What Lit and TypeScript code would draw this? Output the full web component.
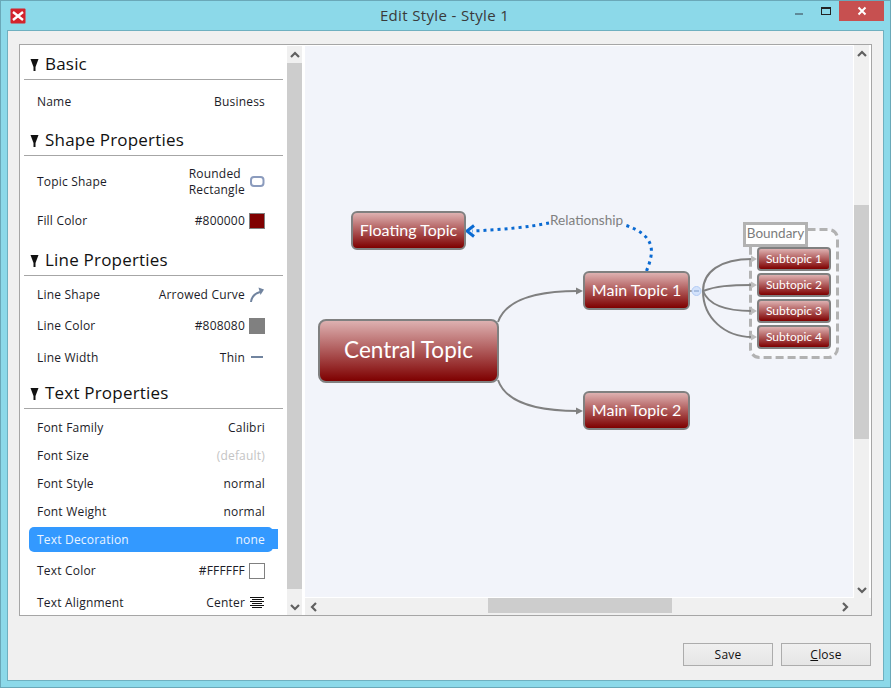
import { LitElement, html, css, svg, nothing } from 'lit';
import { customElement } from 'lit/decorators.js';

type Icon = 'shape' | 'curve' | 'thin' | 'align';

interface Row {
  label: string;
  value: string | string[];
  h: number;
  swatch?: string;
  icon?: Icon;
  muted?: boolean;
  selected?: boolean;
}

interface Section {
  title: string;
  pad: string;
  rows: Row[];
}

interface TopicNode {
  label: string;
  x: number;
  y: number;
  w: number;
  h: number;
  size: string;
}

const SECTIONS: Section[] = [
  {
    title: 'Basic',
    pad: '6px 0 10px',
    rows: [{ label: 'Name', value: 'Business', h: 30 }],
  },
  {
    title: 'Shape Properties',
    pad: '6px 0 6px',
    rows: [
      { label: 'Topic Shape', value: ['Rounded', 'Rectangle'], h: 39, icon: 'shape' },
      { label: 'Fill Color', value: '#800000', h: 39, swatch: '#800000' },
    ],
  },
  {
    title: 'Line Properties',
    pad: '3px 0 6px',
    rows: [
      { label: 'Line Shape', value: 'Arrowed Curve', h: 31, icon: 'curve' },
      { label: 'Line Color', value: '#808080', h: 31, swatch: '#808080' },
      { label: 'Line Width', value: 'Thin', h: 32, icon: 'thin' },
    ],
  },
  {
    title: 'Text Properties',
    pad: '4px 0 0',
    rows: [
      { label: 'Font Family', value: 'Calibri', h: 28 },
      { label: 'Font Size', value: '(default)', h: 28, muted: true },
      { label: 'Font Style', value: 'normal', h: 28 },
      { label: 'Font Weight', value: 'normal', h: 28 },
      { label: 'Text Decoration', value: 'none', h: 29, selected: true },
      { label: 'Text Color', value: '#FFFFFF', h: 33, swatch: '#ffffff' },
      { label: 'Text Alignment', value: 'Center', h: 31, icon: 'align' },
    ],
  },
];

// page coordinates, the canvas svg uses the same ones through its viewBox
const NODES: TopicNode[] = [
  { label: 'Central Topic', x: 318, y: 319, w: 181, h: 64, size: 'xl' },
  { label: 'Floating Topic', x: 351, y: 211, w: 115, h: 39, size: 'md' },
  { label: 'Main Topic 1', x: 583, y: 271, w: 107, h: 39, size: 'md' },
  { label: 'Main Topic 2', x: 583, y: 391, w: 107, h: 39, size: 'md' },
  { label: 'Subtopic 1', x: 757, y: 247, w: 74, h: 24, size: 'sm' },
  { label: 'Subtopic 2', x: 757, y: 273, w: 74, h: 24, size: 'sm' },
  { label: 'Subtopic 3', x: 757, y: 299, w: 74, h: 24, size: 'sm' },
  { label: 'Subtopic 4', x: 757, y: 325, w: 74, h: 24, size: 'sm' },
];

const CANVAS_X = 305;
const CANVAS_Y = 46;

@customElement('app-root')
export class AppRoot extends LitElement {
  static styles = css`
    :host {
      display: block;
      width: 891px;
      height: 688px;
      font-family: 'Open Sans', 'Noto Sans', sans-serif;
      font-size: 12px;
      letter-spacing: 0.2px;
      color: #1c1c28;
    }

    .window {
      box-sizing: border-box;
      width: 891px;
      height: 688px;
      display: flex;
      flex-direction: column;
      background: #8cd9e9;
      border: 1px solid #6aa8b8;
      padding: 0 6px 6px;
    }

    .titlebar {
      position: relative;
      height: 29px;
      flex-shrink: 0;
      display: flex;
      align-items: center;
      justify-content: center;
    }

    .title {
      font-size: 15px;
      letter-spacing: 0.35px;
      color: #3a3a3a;
      margin: -1px 0 0 -2px;
    }

    .app-icon {
      position: absolute;
      left: 3px;
      top: 7px;
    }

    .win-buttons {
      position: absolute;
      right: 0;
      top: 0;
      display: flex;
      align-items: flex-start;
    }

    .win-min {
      width: 8px;
      height: 2px;
      background: #5f8a98;
      margin: 12px 18px 0 0;
    }

    .win-max {
      box-sizing: border-box;
      width: 10px;
      height: 8px;
      border: 1px solid #222;
      border-top-width: 2px;
      margin: 6px 8px 0 0;
    }

    .win-close {
      width: 45px;
      height: 20px;
      background: #c75050;
      display: flex;
      align-items: center;
      justify-content: center;
    }

    .client {
      flex: 1;
      min-height: 0;
      display: flex;
      flex-direction: column;
      background: #f0f0f0;
      border: 1px solid #6fb0c0;
      padding: 13px 11px 14px;
    }

    .group {
      flex: 1;
      min-height: 0;
      display: flex;
      background: #fff;
      border: 1px solid #a6a6a6;
    }

    .panel {
      width: 267px;
      flex-shrink: 0;
      overflow: hidden;
      padding-top: 5px;
      box-sizing: border-box;
    }

    .section-head {
      height: 29px;
      margin: 0 4px;
      border-bottom: 1px solid #a6a6a6;
      display: flex;
      align-items: center;
      gap: 6px;
      padding-left: 6px;
      font-size: 17px;
      letter-spacing: 0.2px;
      color: #111;
    }

    .section-head span {
      margin-top: -2px;
    }

    .row {
      position: relative;
      display: flex;
      align-items: center;
      justify-content: space-between;
      margin: 0 14px 0 9px;
      padding: 0 8px;
    }

    .row.selected {
      color: #eaf4ff;
    }

    .row.selected::before {
      content: '';
      position: absolute;
      left: 0;
      right: 0;
      top: 2px;
      bottom: 2px;
      background: #3399ff;
      border-radius: 5px;
    }

    .row.selected::after {
      content: '';
      position: absolute;
      right: -5px;
      width: 7px;
      top: 4px;
      bottom: 5px;
      background: #3399ff;
    }

    .row.selected span {
      position: relative;
      z-index: 1;
    }

    .value {
      display: flex;
      align-items: center;
      gap: 4px;
    }

    .value-lines {
      line-height: 16px;
    }

    .muted {
      color: #c4c4c4;
    }

    .swatch {
      box-sizing: border-box;
      width: 16px;
      height: 16px;
      border: 1px solid #808080;
    }

    .icon {
      display: block;
      width: 16px;
      height: 16px;
    }

    .vbar {
      width: 15px;
      flex-shrink: 0;
      display: flex;
      flex-direction: column;
      background: #f0f0f0;
    }

    .vbar.left {
      margin-top: 1px;
    }

    .vbar.right {
      margin-right: 2px;
    }

    .arrow-cell {
      flex-shrink: 0;
      height: 17px;
      display: flex;
      align-items: center;
      justify-content: center;
    }

    .track {
      flex: 1;
      min-height: 0;
    }

    .thumb {
      background: #cdcdcd;
    }

    .left .thumb {
      height: 526px;
    }

    .right .thumb {
      height: 234px;
      margin-top: 143px;
    }

    .stage {
      flex: 1;
      min-width: 0;
      display: flex;
      flex-direction: column;
      padding-left: 3px;
    }

    .stage-top {
      flex: 1;
      min-height: 0;
      display: flex;
    }

    .canvas {
      position: relative;
      flex: 1;
      margin-top: 1px;
      background: #f2f4fa;
      border-right: 1px solid #fff;
      border-bottom: 1px solid #fff;
      overflow: hidden;
    }

    .canvas svg.links {
      position: absolute;
      left: 0;
      top: 0;
    }

    .hbar {
      height: 17px;
      flex-shrink: 0;
      display: flex;
      align-items: stretch;
      background: #f0f0f0;
    }

    .hbar .arrow-cell {
      width: 17px;
      height: auto;
    }

    .hbar .track {
      display: flex;
      padding-bottom: 2px;
    }

    .hbar .thumb {
      width: 184px;
      margin-left: 166px;
    }

    .hbar-corner {
      width: 18px;
    }

    .topic {
      position: absolute;
      box-sizing: border-box;
      display: flex;
      align-items: center;
      justify-content: center;
      font-family: Lato, 'Open Sans', sans-serif;
      letter-spacing: 0;
      color: #fff;
      white-space: nowrap;
      border: 2px solid #808080;
      background: linear-gradient(#deb1b1, #7e0000);
    }

    .topic.xl {
      font-size: 22.5px;
      border-radius: 8px;
      padding-bottom: 3px;
    }

    .topic.md {
      font-size: 16px;
      border-radius: 6px;
      padding-bottom: 2px;
    }

    .topic.sm {
      font-size: 12px;
      border-radius: 4px;
      padding-bottom: 2px;
    }

    .boundary-label {
      position: absolute;
      left: 438px;
      top: 176px;
      box-sizing: border-box;
      width: 65px;
      height: 25px;
      padding-bottom: 3px;
      display: flex;
      align-items: center;
      justify-content: center;
      background: #fff;
      border: 3px solid #b2b2b2;
      font-family: Lato, 'Open Sans', sans-serif;
      font-size: 13.5px;
      letter-spacing: 0;
      color: #7c7c7c;
    }

    .rel-label {
      position: absolute;
      left: 245px;
      top: 166px;
      font-family: Lato, 'Open Sans', sans-serif;
      font-size: 13.6px;
      letter-spacing: 0;
      line-height: 16px;
      color: #808080;
    }

    .footer {
      flex-shrink: 0;
      display: flex;
      justify-content: flex-end;
      gap: 8px;
      margin-top: 27px;
      padding-right: 1px;
    }

    button {
      box-sizing: border-box;
      width: 90px;
      height: 23px;
      padding: 0;
      font: inherit;
      letter-spacing: inherit;
      color: #111;
      border: 1px solid #acacac;
      background: linear-gradient(#f0f0f0, #e5e5e5);
    }

    u {
      text-decoration-thickness: 1px;
    }
  `;

  private _chevron(dir: 'up' | 'down' | 'left' | 'right') {
    const points = {
      up: '1,7 5,3 9,7',
      down: '1,3 5,7 9,3',
      left: '7,1 3,5 7,9',
      right: '3,1 7,5 3,9',
    }[dir];
    return html`<svg width="10" height="10" viewBox="0 0 10 10">
      <polyline points=${points} fill="none" stroke="#606060" stroke-width="2.2"></polyline>
    </svg>`;
  }

  private _icon(icon: Icon) {
    switch (icon) {
      case 'shape':
        return html`<svg class="icon" viewBox="0 0 16 16">
          <rect x="2" y="3" width="12.5" height="9" rx="3" fill="none" stroke="#8b9bbd" stroke-width="2"></rect>
        </svg>`;
      case 'curve':
        return html`<svg class="icon" viewBox="0 0 16 16">
          <path d="M2 15 C2.5 10.5 5.5 6.5 11 5" fill="none" stroke="#71849f" stroke-width="2"></path>
          <path d="M9.5 0.5 L15 2.5 L11.5 8 Z" fill="#71849f"></path>
        </svg>`;
      case 'thin':
        return html`<svg class="icon" viewBox="0 0 16 16">
          <rect x="2" y="7" width="12" height="2" fill="#71849f"></rect>
        </svg>`;
      case 'align':
        return html`<svg class="icon" viewBox="0 0 16 16">
          <path d="M1 2.5H15M3 4.5H13M1 6.5H15M3 8.5H13M1 10.5H15M3 12.5H13" fill="none" stroke="#111" stroke-width="1"></path>
        </svg>`;
    }
  }

  private _renderRow(row: Row) {
    const lines = Array.isArray(row.value) ? row.value : null;
    return html`
      <div class="row ${row.selected ? 'selected' : ''}" style="height:${row.h}px">
        <span>${row.label}</span>
        <span class="value">
          ${lines
            ? html`<span class="value-lines">${lines[0]}<br />${lines[1]}</span>`
            : html`<span class=${row.muted ? 'muted' : ''}>${row.value}</span>`}
          ${row.swatch ? html`<span class="swatch" style="background:${row.swatch}"></span>` : nothing}
          ${row.icon ? this._icon(row.icon) : nothing}
        </span>
      </div>
    `;
  }

  private _renderSection(section: Section) {
    return html`
      <div class="section-head">
        <svg width="9" height="12" viewBox="0 0 9 12">
          <path d="M0.5 0H8.5L5.5 8V12H3.5V8Z" fill="#111"></path>
        </svg>
        <span>${section.title}</span>
      </div>
      <div style="padding:${section.pad}">${section.rows.map((r) => this._renderRow(r))}</div>
    `;
  }

  private _renderLinks() {
    const grey = '#808080';
    const blue = '#0a6ad2';
    return html`<svg class="links" width="548" height="551" viewBox="${CANVAS_X} ${CANVAS_Y} 548 551">
      ${svg`
        <path d="M498 322 C506 299 536 291 578 291" fill="none" stroke=${grey} stroke-width="2"></path>
        <path d="M498 380 C506 403 536 411 578 411" fill="none" stroke=${grey} stroke-width="2"></path>
        <path d="M583 291 L576 287.5 V294.5 Z" fill=${grey}></path>
        <path d="M583 411 L576 407.5 V414.5 Z" fill=${grey}></path>

        <rect x="750.5" y="229.5" width="87" height="128" rx="9" fill="#ffffff" fill-opacity="0.45"
          stroke="#b2b2b2" stroke-width="3" stroke-dasharray="8 4"></rect>

        <path d="M703 291 C703 272 720 259 752 259" fill="none" stroke=${grey} stroke-width="2"></path>
        <path d="M703 291 C716 286 730 285 752 285" fill="none" stroke=${grey} stroke-width="2"></path>
        <path d="M703 291 C708 304 725 311 752 311" fill="none" stroke=${grey} stroke-width="2"></path>
        <path d="M703 291 C703 318 725 337 752 337" fill="none" stroke=${grey} stroke-width="2"></path>
        <path d="M757 259 L751 255.5 V262.5 Z M757 285 L751 281.5 V288.5 Z M757 311 L751 307.5 V314.5 Z M757 337 L751 333.5 V340.5 Z" fill="#bdbdbd"></path>

        <path d="M690 291 H692" stroke=${grey} stroke-width="1.5"></path>
        <circle cx="696.5" cy="291" r="4.5" fill="#d3e2fb" stroke="#b3ccf5"></circle>
        <path d="M694 291 H699" stroke="#7f9cc9" stroke-width="1"></path>

        <path d="M646.5 271 C654 252 657 236 625 225" fill="none" stroke=${blue} stroke-width="3" stroke-dasharray="3 4"></path>
        <path d="M549 223 C530 227 500 230 472 231" fill="none" stroke=${blue} stroke-width="3" stroke-dasharray="3 4"></path>
        <path d="M474 225.5 L467 231 L474 236.5" fill="none" stroke=${blue} stroke-width="3"></path>
      `}
    </svg>`;
  }

  render() {
    return html`
      <div class="window">
        <div class="titlebar">
          <svg class="app-icon" width="16" height="16" viewBox="0 0 16 16">
            <rect x="0.5" y="0.5" width="15" height="15" rx="1" fill="#d3232c"></rect>
            <path d="M3 4 L13 12 M13 4 L3 12" stroke="#fff" stroke-width="2.4"></path>
          </svg>
          <span class="title">Edit Style - Style 1</span>
          <div class="win-buttons">
            <div class="win-min"></div>
            <div class="win-max"></div>
            <div class="win-close">
              <svg width="10" height="10" viewBox="0 0 10 10">
                <path d="M1.5 1.5 L8.5 8.5 M8.5 1.5 L1.5 8.5" stroke="#fff" stroke-width="2"></path>
              </svg>
            </div>
          </div>
        </div>
        <div class="client">
          <div class="group">
            <div class="panel">${SECTIONS.map((s) => this._renderSection(s))}</div>
            <div class="vbar left">
              <div class="arrow-cell">${this._chevron('up')}</div>
              <div class="track"><div class="thumb"></div></div>
              <div class="arrow-cell">${this._chevron('down')}</div>
            </div>
            <div class="stage">
              <div class="stage-top">
                <div class="canvas">
                  ${this._renderLinks()}
                  ${NODES.map(
                    (n) => html`<div
                      class="topic ${n.size}"
                      style="left:${n.x - CANVAS_X}px;top:${n.y - CANVAS_Y}px;width:${n.w}px;height:${n.h}px"
                    >
                      ${n.label}
                    </div>`
                  )}
                  <div class="boundary-label">Boundary</div>
                  <div class="rel-label">Relationship</div>
                </div>
                <div class="vbar right">
                  <div class="arrow-cell">${this._chevron('up')}</div>
                  <div class="track"><div class="thumb"></div></div>
                  <div class="arrow-cell">${this._chevron('down')}</div>
                </div>
              </div>
              <div class="hbar">
                <div class="arrow-cell">${this._chevron('left')}</div>
                <div class="track"><div class="thumb"></div></div>
                <div class="arrow-cell">${this._chevron('right')}</div>
                <div class="hbar-corner"></div>
              </div>
            </div>
          </div>
          <div class="footer">
            <button>Save</button>
            <button><u>C</u>lose</button>
          </div>
        </div>
      </div>
    `;
  }
}

declare global {
  interface HTMLElementTagNameMap {
    'app-root': AppRoot;
  }
}
